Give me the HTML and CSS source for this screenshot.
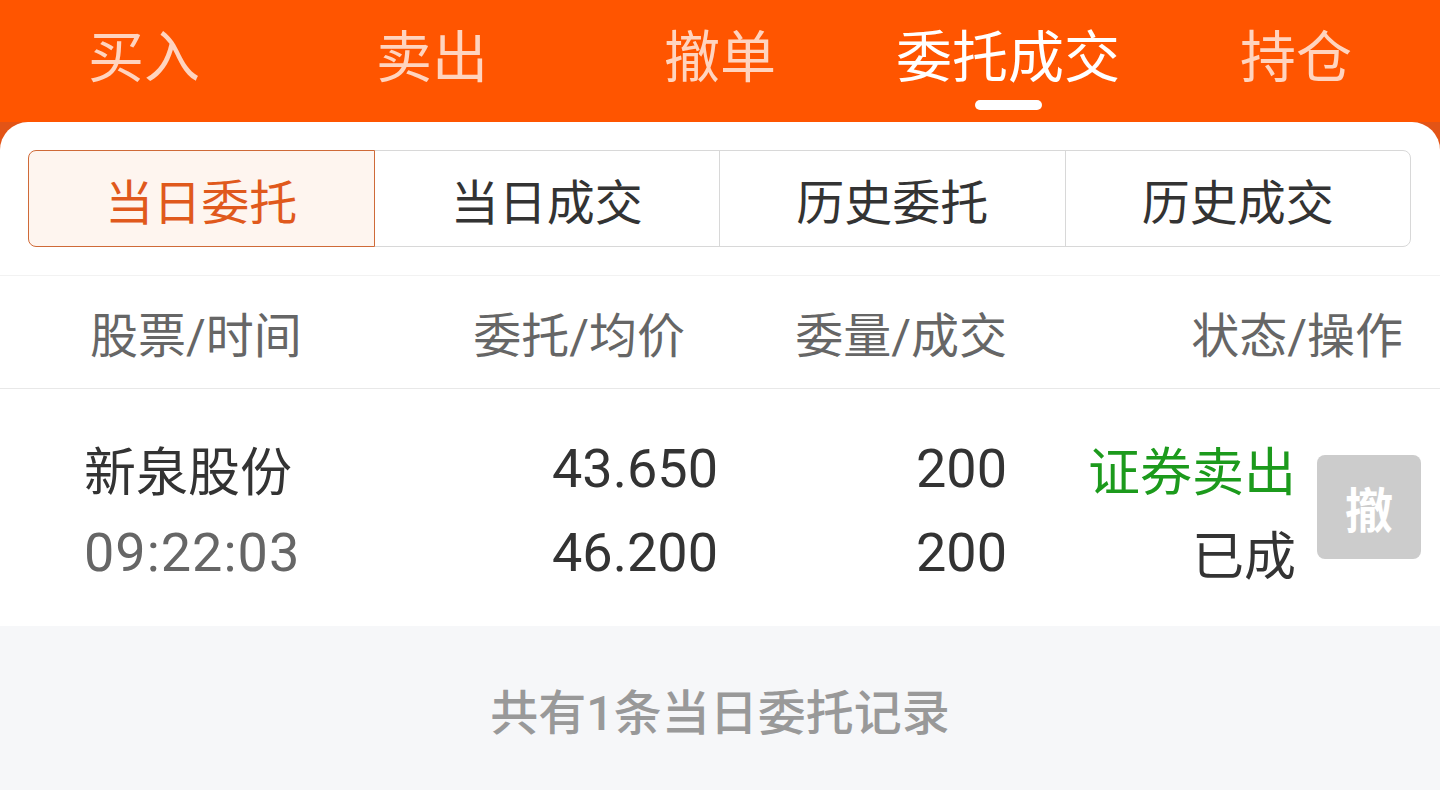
FILE: index.html
```html
<!DOCTYPE html>
<html lang="zh-CN">

<head>
    <meta charset="UTF-8">
    <meta name="viewport" content="width=device-width, initial-scale=1.0">
    <title>委托成交</title>
    <link rel="stylesheet" href="styles.css">
</head>

<body>
    <div class="app">
        <nav class="topnav">
            <a class="tab">买入</a>
            <a class="tab">卖出</a>
            <a class="tab">撤单</a>
            <a class="tab active">委托成交</a>
            <a class="tab">持仓</a>
        </nav>

        <main class="panel">
            <div class="seg-wrap">
                <div class="seg">
                    <span class="seg-item active">当日委托</span>
                    <span class="seg-item">当日成交</span>
                    <span class="seg-item">历史委托</span>
                    <span class="seg-item">历史成交</span>
                </div>
            </div>

            <div class="thead">
                <span class="left">股票/时间</span>
                <span>委托/均价</span>
                <span>委量/成交</span>
                <span>状态/操作</span>
            </div>

            <div class="trow">
                <span class="name">新泉股份</span>
                <span class="num">43.650</span>
                <span class="num">200</span>
                <span class="status sell">证券卖出</span>
                <button class="cancel">撤</button>
                <span class="time">09:22:03</span>
                <span class="num">46.200</span>
                <span class="num">200</span>
                <span class="status">已成</span>
            </div>

            <div class="footer">共有1条当日委托记录</div>
        </main>
    </div>
</body>

</html>
```

FILE: styles.css
```css
html,
body {
    margin: 0;
    height: 100%;
    font-family: Roboto, "Noto Sans CJK SC", sans-serif;
}

.app {
    height: 100%;
    background-color: #e35416;
    display: flex;
    flex-direction: column;
}

/* top tabs */
.topnav {
    height: 122px;
    flex: none;
    background-color: #ff5500;
    display: grid;
    grid-template-columns: repeat(5, 1fr);
}

.tab {
    display: flex;
    flex-direction: column;
    align-items: center;
    padding-top: 28px;
    font-size: 56px;
    line-height: 60px;
    color: #ffd4bf;
}

.tab.active {
    color: #fff;
}

.tab.active::after {
    content: "";
    width: 67px;
    height: 10px;
    margin-top: 12px;
    border-radius: 5px;
    background-color: #fff;
}

/* white panel */
.panel {
    flex: 1;
    background-color: #fff;
    border-radius: 28px 28px 0 0;
    display: flex;
    flex-direction: column;
    overflow: hidden;
}

.seg-wrap {
    padding: 28px 29px 28px 28px;
}

.seg {
    display: flex;
    height: 97px;
}

.seg-item {
    flex: 1;
    display: flex;
    align-items: center;
    justify-content: center;
    border: 1px solid #d8d8d8;
    margin-left: -1px;
    font-size: 48px;
    color: #333;
}

.seg-item:first-child {
    margin-left: 0;
    border-radius: 8px 0 0 8px;
}

.seg-item:last-child {
    border-radius: 0 8px 8px 0;
}

.seg-item.active {
    position: relative;
    z-index: 1;
    border-color: #cf6a38;
    background-color: #fef5ef;
    color: #e0591c;
}

/* table head */
.thead {
    height: 112px;
    border-top: 1px solid #f2f2f2;
    border-bottom: 1px solid #e8e8e8;
    padding: 0 37px 0 90px;
    display: grid;
    grid-template-columns: 300px 295px 322px 396px;
    align-items: center;
    font-size: 48px;
    color: #666;
    text-align: right;
}

.thead .left {
    text-align: left;
}

/* data row */
.trow {
    height: 237px;
    box-sizing: border-box;
    padding: 37px 19px 32px 84px;
    display: grid;
    grid-template-columns: 300px 334px 289px 289px 125px;
    grid-template-rows: 84px 84px;
    align-items: center;
    font-size: 54px;
    color: #333;
}

.trow .name,
.trow .status {
    font-size: 52px;
}

.trow .num,
.trow .status {
    text-align: right;
}

.trow .time {
    color: #666;
    letter-spacing: 1px;
}

.trow .sell {
    color: #1c9a1c;
}

.cancel {
    grid-column: 5;
    grid-row: 1 / 3;
    justify-self: end;
    width: 104px;
    height: 104px;
    border: none;
    border-radius: 8px;
    background-color: #cccccc;
    color: #fff;
    font-family: Roboto, "Noto Sans CJK SC", sans-serif;
    font-size: 48px;
    font-weight: bold;
    padding: 0;
    margin-bottom: 6px;
}

.footer {
    flex: 1;
    background-color: #f6f7f9;
    padding-top: 58px;
    text-align: center;
    font-size: 48px;
    line-height: 60px;
    font-weight: 500;
    color: #999;
}
```
